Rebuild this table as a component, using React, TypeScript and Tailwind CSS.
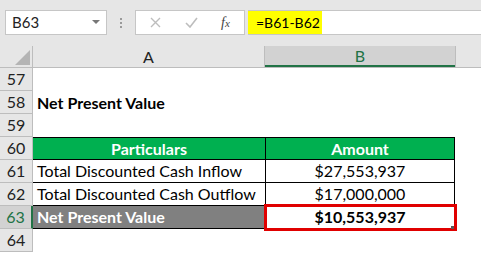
const rows = [
  { n: 57 },
  { n: 58, a: 'Net Present Value', kind: 'title' },
  { n: 59 },
  { n: 60, a: 'Particulars', b: 'Amount', kind: 'head' },
  { n: 61, a: 'Total Discounted Cash Inflow', b: '$27,553,937', kind: 'body' },
  { n: 62, a: 'Total Discounted Cash Outflow', b: '$17,000,000', kind: 'body' },
  { n: 63, a: 'Net Present Value', b: '$10,553,937', kind: 'total' },
  { n: 64 },
];

function Cells({ r }: { r: (typeof rows)[number] }) {
  if (r.kind === 'title') {
    return <div className="flex items-center pl-[4px] font-bold text-black">{r.a}</div>;
  }
  if (r.kind === 'head') {
    return (
      <div className="flex">
        <div className="w-[232px] h-[23px] flex items-center justify-center bg-[#00b050] text-white font-bold border-t border-b border-black">
          {r.a}
        </div>
        <div className="w-[190px] h-[23px] flex items-center justify-center bg-[#00b050] text-white font-bold border border-black">
          {r.b}
        </div>
      </div>
    );
  }
  if (r.kind === 'body') {
    return (
      <div className="flex">
        <div className="w-[232px] h-[23px] flex items-center pl-[4px] text-black border-b border-black">{r.a}</div>
        <div className="w-[190px] h-[23px] flex items-center justify-center text-black border-x border-b border-black">
          {r.b}
        </div>
      </div>
    );
  }
  if (r.kind === 'total') {
    return (
      <div className="flex">
        <div className="w-[232px] h-[23px] flex items-center pl-[4px] bg-[#808080] text-white font-bold border-b border-black">
          {r.a}
        </div>
        <div className="relative w-[190px] h-[23px] flex items-center justify-center text-black font-bold border-x border-b border-black">
          {r.b}
          <div className="absolute left-[-2px] top-[-2px] w-[193px] h-[27px] border-[3px] border-[#e00000]" />
          <div className="absolute right-[0px] bottom-[-1px] w-[3px] h-[3px] bg-[#5a5a5a]" />
        </div>
      </div>
    );
  }
  return null;
}

export default function App() {
  return (
    <div className="w-[481px] h-[254px] overflow-hidden bg-white text-[16px] font-['Lato','Liberation_Sans',sans-serif]">
      {/* formula bar */}
      <div className="h-[46px] bg-[#e6e6e6] flex items-start pt-[10px]">
        <div className="ml-[5px] w-[102px] h-[25px] bg-white border border-[#c6c6c6] flex items-center justify-between pl-[6px] pr-[6px] text-[15px] text-[#222]">
          <span>B63</span>
          <svg width="8" height="5" viewBox="0 0 8 5">
            <path d="M0 0h8L4 4z" fill="#777" />
          </svg>
        </div>
        <div className="ml-[13px] mt-[8px] flex flex-col gap-[2px]">
          <div className="w-[2px] h-[2px] bg-[#9a9a9a]" />
          <div className="w-[2px] h-[2px] bg-[#9a9a9a]" />
          <div className="w-[2px] h-[2px] bg-[#9a9a9a]" />
        </div>
        <div className="ml-[13px] w-[110px] h-[25px] bg-white border border-[#c6c6c6] flex items-center">
          <svg className="ml-[14px]" width="11" height="11" viewBox="0 0 11 11">
            <path d="M1 1l9 9M10 1l-9 9" stroke="#bdbdbd" strokeWidth="1.4" />
          </svg>
          <svg className="ml-[24px]" width="13" height="11" viewBox="0 0 13 11">
            <path d="M1 6l4 4 7-9" stroke="#bdbdbd" strokeWidth="1.6" fill="none" />
          </svg>
          <span className="ml-[23px] text-[14px] italic text-[#444] font-['Liberation_Serif',serif]">
            f<span className="text-[11px]">x</span>
          </span>
        </div>
        <div className="ml-[3px] flex-1 h-[25px] bg-white border-y border-[#c6c6c6] flex items-center">
          <div className="w-[74px] h-[23px] bg-[#ffff00] flex items-center pl-[8px] text-[14px] text-black whitespace-nowrap">
            =B61-B62
          </div>
        </div>
      </div>

      {/* column headers */}
      <div className="flex h-[22px] bg-[#e6e6e6] border-b border-[#bdbdbd]">
        <div className="w-[33px] h-full flex items-end justify-end pr-[2px] pb-[2px] border-r border-[#bdbdbd]">
          <svg width="15" height="15" viewBox="0 0 15 15">
            <path d="M15 0V15H0z" fill="#b4b4b4" />
          </svg>
        </div>
        <div className="w-[232px] flex items-center justify-center text-[#222] border-r border-[#bdbdbd]">A</div>
        <div className="w-[190px] flex items-center justify-center bg-[#d2d2d2] text-[#217346] border-b-2 border-[#217346]">B</div>
        <div className="flex-1 border-l border-[#bdbdbd]" />
      </div>

      {/* rows */}
      {rows.map((r) => (
        <div key={r.n} className="flex h-[23px]">
          <div
            className={
              r.kind === 'total'
                ? 'w-[33px] shrink-0 flex items-center justify-center bg-[#d2d2d2] text-[#217346] border-r-2 border-[#217346] border-b border-b-[#bdbdbd]'
                : 'w-[33px] shrink-0 flex items-center justify-center bg-[#e6e6e6] text-[#222] border-r border-b border-[#bdbdbd]'
            }
          >
            {r.n}
          </div>
          <Cells r={r} />
        </div>
      ))}
    </div>
  );
}
